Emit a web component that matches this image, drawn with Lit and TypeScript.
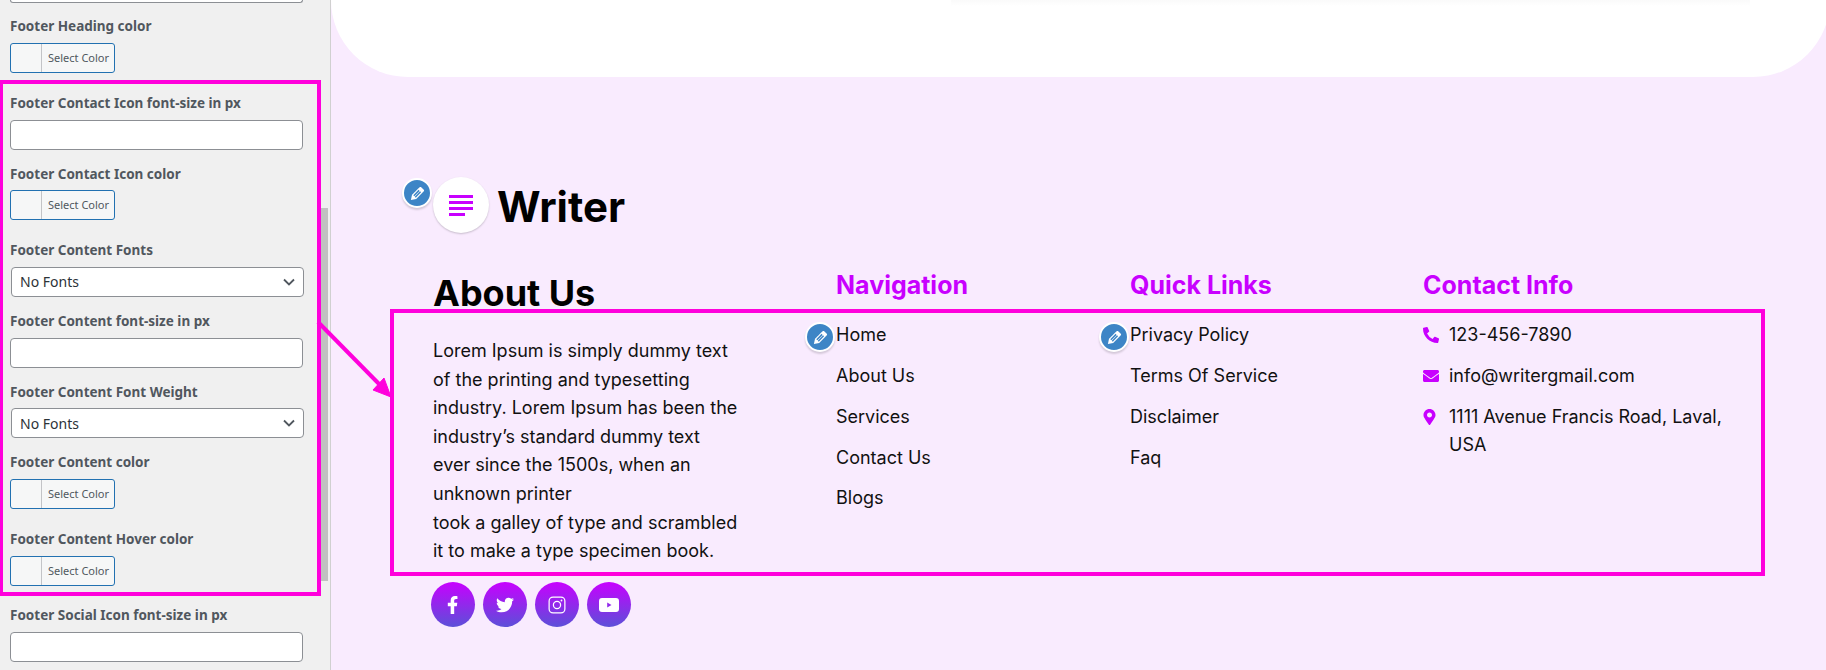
import { LitElement, html, css, svg } from 'lit';
import { customElement } from 'lit/decorators.js';

type Field = { label: string; kind: 'color' | 'input' | 'select' };

const fields: Field[] = [
  { label: 'Footer Heading color', kind: 'color' },
  { label: 'Footer Contact Icon font-size in px', kind: 'input' },
  { label: 'Footer Contact Icon color', kind: 'color' },
  { label: 'Footer Content Fonts', kind: 'select' },
  { label: 'Footer Content font-size in px', kind: 'input' },
  { label: 'Footer Content Font Weight', kind: 'select' },
  { label: 'Footer Content color', kind: 'color' },
  { label: 'Footer Content Hover color', kind: 'color' },
  { label: 'Footer Social Icon font-size in px', kind: 'input' },
];

const nav = ['Home', 'About Us', 'Services', 'Contact Us', 'Blogs'];
const quick = ['Privacy Policy', 'Terms Of Service', 'Disclaimer', 'Faq'];

// dashicons "edit" pencil
const pencil = html`<svg viewBox="0 0 20 20" width="19" height="19" fill="#fff"><path d="M13.89 3.39l2.71 2.72c.46.46.42 1.24.03 1.64l-8.01 8.02-5.56 1.16 1.16-5.58s7.6-7.63 7.99-8.03c.39-.39 1.22-.39 1.68.07zm-2.73 2.79l-5.59 5.61 1.11 1.11 5.54-5.65zm-2.97 8.23l5.58-5.6-1.07-1.08-5.59 5.6z"/></svg>`;

const icons = {
  phone: svg`<path d="M497.39 361.8l-112-48a24 24 0 0 0-28 6.9l-49.6 60.6A370.66 370.66 0 0 1 130.6 204.11l60.6-49.6a23.94 23.94 0 0 0 6.9-28l-48-112A24.16 24.16 0 0 0 122.6.61l-104 24A24 24 0 0 0 0 48c0 256.5 207.9 464 464 464a24 24 0 0 0 23.4-18.6l24-104a24.29 24.29 0 0 0-14.01-27.6z"/>`,
  mail: svg`<path d="M502.3 190.8c3.9-3.1 9.7-.2 9.7 4.7V400c0 26.5-21.5 48-48 48H48c-26.5 0-48-21.5-48-48V195.6c0-5 5.7-7.8 9.7-4.7 22.4 17.4 52.1 39.5 154.1 113.6 21.1 15.4 56.7 47.8 92.2 47.6 35.7.3 72-32.8 92.3-47.6 102-74.1 131.6-96.3 154-113.7zM256 320c23.2.4 56.6-29.2 73.4-41.4 132.7-96.3 142.8-104.7 173.4-128.7 5.8-4.5 9.2-11.5 9.2-18.9v-19c0-26.5-21.5-48-48-48H48C21.5 64 0 85.5 0 112v19c0 7.4 3.4 14.3 9.2 18.9 30.6 23.9 40.7 32.4 173.4 128.7 16.8 12.2 50.2 41.8 73.4 41.4z"/>`,
  marker: svg`<path transform="translate(16 0)" d="M172.268 501.67C26.97 291.031 0 255.594 0 192 0 85.961 85.961 0 192 0s192 85.961 192 192c0 63.594-26.97 99.031-172.268 309.67-9.535 13.774-29.93 13.773-39.464 0zM192 272c44.183 0 80-35.817 80-80s-35.817-80-80-80-80 35.817-80 80 35.817 80 80 80z"/>`,
};

@customElement('app-root')
export class AppRoot extends LitElement {
  static styles = css`
    :host {
      display: flex;
      position: relative;
      width: 1826px;
      height: 670px;
      overflow: hidden;
      background: #f9ebfe;
      font-family: Inter, sans-serif;
    }
    .sidebar {
      flex: none;
      box-sizing: border-box;
      width: 331px;
      height: 670px;
      overflow: hidden;
      background: #f0f0f0;
      border-right: 1px solid #d0d0d0;
      padding: 0 0 0 10px;
      font-family: 'Noto Sans', sans-serif;
    }
    .tail {
      width: 291px;
      height: 2px;
      margin-bottom: 13.4px;
      background: #fff;
      border: 1px solid #8c8f94;
      border-top: none;
      border-radius: 0 0 4px 4px;
    }
    .field {
      margin-bottom: 14px;
    }
    .field.color {
      margin-bottom: 19.75px;
    }
    .label {
      height: 20px;
      line-height: 20px;
      margin-bottom: 6.75px;
      font-size: 13.5px;
      font-weight: 700;
      color: #50575e;
      white-space: nowrap;
    }
    .text-input {
      display: block;
      box-sizing: border-box;
      width: 293px;
      height: 30px;
      padding: 0 8px;
      background: #fff;
      border: 1px solid #8c8f94;
      border-radius: 4px;
    }
    .dropdown {
      display: flex;
      align-items: center;
      justify-content: space-between;
      box-sizing: border-box;
      width: 293px;
      height: 30px;
      margin-left: 1px;
      padding: 0 8px;
      background: #fff;
      border: 1px solid #8c8f94;
      border-radius: 4px;
      font-size: 14px;
      color: #2c3338;
    }
    .swatch {
      display: flex;
      box-sizing: border-box;
      width: 105px;
      height: 30px;
      background: #f6f7f7;
      border: 1px solid #2271b1;
      border-radius: 3px;
      font-size: 11px;
      line-height: 28px;
      color: #50575e;
    }
    .swatch i {
      width: 30px;
      border-right: 1px solid #c3c4c7;
    }
    .swatch span {
      padding-left: 6px;
      white-space: nowrap;
    }
    .thumb {
      position: absolute;
      left: 321px;
      top: 208px;
      width: 7px;
      height: 373px;
      background: #c1c1c1;
    }
    main {
      flex: 1;
      min-width: 0;
    }
    .card {
      height: 77px;
      width: 1499px;
      background: #fff;
      border-radius: 0 0 100px 100px;
      overflow: hidden;
    }
    .card-shadow {
      height: 6px;
      margin: 0 80px 0 620px;
      background: linear-gradient(#fafafa, #fff);
    }
    footer {
      padding: 100px 0 0 102px;
      color: #111;
    }
    .logo {
      display: flex;
      align-items: center;
      gap: 8px;
      height: 56px;
      margin-bottom: 28px;
    }
    .logo-mark {
      display: flex;
      align-items: center;
      justify-content: center;
      width: 56px;
      height: 56px;
      border-radius: 50%;
      background: #fff;
      box-shadow: 0 1px 2px rgba(0, 0, 0, 0.2);
    }
    .logo-name {
      padding-top: 2px;
      font-size: 42px;
      font-weight: 700;
      color: #000;
    }
    .cols {
      display: grid;
      grid-template-columns: 403px 294px 293px 293px;
    }
    h2 {
      margin: 10px 0 0;
      font-size: 36px;
      line-height: 44px;
      font-weight: 700;
      color: #000;
    }
    h3 {
      margin: 10px 0 0;
      font-size: 25px;
      line-height: 29px;
      font-weight: 700;
      color: #c800ff;
    }
    p {
      width: 306px;
      margin: 22px 0 0;
      font-size: 18px;
      line-height: 28.6px;
      color: #111;
    }
    ul {
      list-style: none;
      margin: 21.3px 0 0;
      padding: 0;
    }
    li {
      height: 40.8px;
      font-size: 18px;
      line-height: 28px;
      color: #111;
    }
    .contact li {
      display: flex;
      height: auto;
      margin-bottom: 12.8px;
      gap: 10px;
    }
    .contact svg {
      flex: none;
      width: 16px;
      height: 16px;
      margin: 6px 0 0 0;
      fill: #c800ff;
    }
    .contact span {
      flex: none;
      width: 290px;
    }
    .social {
      display: flex;
      gap: 8px;
      margin: 16px 0 0 -2px;
    }
    .social a {
      display: flex;
      align-items: center;
      justify-content: center;
      box-sizing: border-box;
      width: 44px;
      height: 45px;
      padding-top: 1px;
      border-radius: 50%;
      background: linear-gradient(#c800ff, #5c50d8);
    }
    .edit {
      position: absolute;
      display: flex;
      align-items: center;
      justify-content: center;
      box-sizing: border-box;
      width: 30px;
      height: 30px;
      border-radius: 50%;
      background: #3d85c6;
      border: 2px solid #fff;
      box-shadow: 0 2px 2px rgba(0, 0, 0, 0.15);
    }
    .notes {
      position: absolute;
      left: 0;
      top: 0;
      pointer-events: none;
    }
  `;

  private renderField(f: Field) {
    let control;
    if (f.kind === 'color') {
      control = html`<div class="swatch"><i></i><span>Select Color</span></div>`;
    } else if (f.kind === 'input') {
      control = html`<input class="text-input" type="text" />`;
    } else {
      control = html`<div class="dropdown">
        <span>No Fonts</span>
        <svg width="12" height="8" viewBox="0 0 12 8" fill="none" stroke="#50575e" stroke-width="1.8"><path d="M1 1.5l5 5 5-5" /></svg>
      </div>`;
    }
    return html`<div class="field ${f.kind}">
      <div class="label">${f.label}</div>
      ${control}
    </div>`;
  }

  render() {
    return html`
      <aside class="sidebar">
        <div class="tail"></div>
        ${fields.map((f) => this.renderField(f))}
      </aside>
      <div class="thumb"></div>
      <main>
        <div class="card"><div class="card-shadow"></div></div>
        <footer>
          <div class="logo">
            <div class="logo-mark">
              <svg width="24" height="21" viewBox="0 0 24 21" fill="#c800ff">
                <rect width="24" height="3" /><rect y="6" width="24" height="3" />
                <rect y="12" width="24" height="3" /><rect y="18" width="16" height="3" />
              </svg>
            </div>
            <div class="logo-name">Writer</div>
          </div>
          <div class="cols">
            <div>
              <h2>About Us</h2>
              <p>
                Lorem Ipsum is simply dummy text of the printing and typesetting industry. Lorem
                Ipsum has been the industry’s standard dummy text ever since the 1500s, when an
                unknown printer<br />took a galley of type and scrambled it to make a type specimen
                book.
              </p>
            </div>
            <div>
              <h3>Navigation</h3>
              <ul>${nav.map((n) => html`<li>${n}</li>`)}</ul>
            </div>
            <div>
              <h3>Quick Links</h3>
              <ul>${quick.map((n) => html`<li>${n}</li>`)}</ul>
            </div>
            <div>
              <h3>Contact Info</h3>
              <ul class="contact">
                <li><svg viewBox="0 0 512 512">${icons.phone}</svg><span>123-456-7890</span></li>
                <li><svg viewBox="0 0 512 512">${icons.mail}</svg><span>info@writergmail.com</span></li>
                <li><svg viewBox="0 0 512 512">${icons.marker}</svg><span>1111 Avenue Francis Road, Laval, USA</span></li>
              </ul>
            </div>
          </div>
          <div class="social">
            <a>
              <svg viewBox="0 0 320 512" width="11.25" height="18" fill="#fff"><path d="M279.14 288l14.22-92.66h-88.91v-60.13c0-25.35 12.42-50.06 52.24-50.06h40.42V6.26S260.43 0 225.36 0c-73.22 0-121.08 44.38-121.08 124.72v70.62H22.89V288h81.39v224h100.17V288z" /></svg>
            </a>
            <a>
              <svg viewBox="0 0 512 512" width="18" height="18" fill="#fff"><path d="M459.37 151.716c.325 4.548.325 9.097.325 13.645 0 138.72-105.583 298.558-298.558 298.558-59.452 0-114.68-17.219-161.137-47.106 8.447.974 16.568 1.299 25.34 1.299 49.055 0 94.213-16.568 130.274-44.832-46.132-.975-84.792-31.188-98.112-72.772 6.498.974 12.995 1.624 19.818 1.624 9.421 0 18.843-1.3 27.614-3.573-48.081-9.747-84.143-51.98-84.143-102.985v-1.299c13.969 7.797 30.214 12.67 47.431 13.319-28.264-18.843-46.781-51.005-46.781-87.391 0-19.492 5.197-37.36 14.294-52.954 51.655 63.675 129.3 105.258 216.365 109.807-1.624-7.797-2.599-15.918-2.599-24.04 0-57.828 46.782-104.934 104.934-104.934 30.213 0 57.502 12.67 76.67 33.137 23.715-4.548 46.456-13.32 66.599-25.34-7.798 24.366-24.366 44.833-46.132 57.827 21.117-2.273 41.584-8.122 60.426-16.243-14.292 20.791-32.161 39.308-52.628 54.253z" /></svg>
            </a>
            <a>
              <svg viewBox="0 0 16 16" width="18" height="18" fill="none" stroke="#fff" stroke-width="1.1">
                <rect x="1" y="1" width="14" height="14" rx="3.5" /><circle cx="8" cy="8" r="3.2" /><circle cx="12" cy="4" r=".8" fill="#fff" stroke="none" />
              </svg>
            </a>
            <a>
              <svg viewBox="0 0 20 14" width="20" height="14"><path fill="#fff" fill-rule="evenodd" d="M3 0h14a3 3 0 0 1 3 3v8a3 3 0 0 1-3 3H3a3 3 0 0 1-3-3V3a3 3 0 0 1 3-3zM8.2 4.5v5l4.3-2.5z" /></svg>
            </a>
          </div>
        </footer>
      </main>
      <span class="edit" style="left:402px;top:178px">${pencil}</span>
      <span class="edit" style="left:805px;top:322px">${pencil}</span>
      <span class="edit" style="left:1099px;top:322px">${pencil}</span>
      <svg class="notes" width="1826" height="670" fill="none" stroke="#ff00dc" stroke-width="4">
        <rect x="1" y="82" width="318" height="512" />
        <rect x="392" y="311" width="1371" height="263" />
        <path d="M318 322L384 389" />
        <path d="M391 397L373 390L384 378Z" fill="#ff00dc" stroke-width="1" />
      </svg>
    `;
  }
}
